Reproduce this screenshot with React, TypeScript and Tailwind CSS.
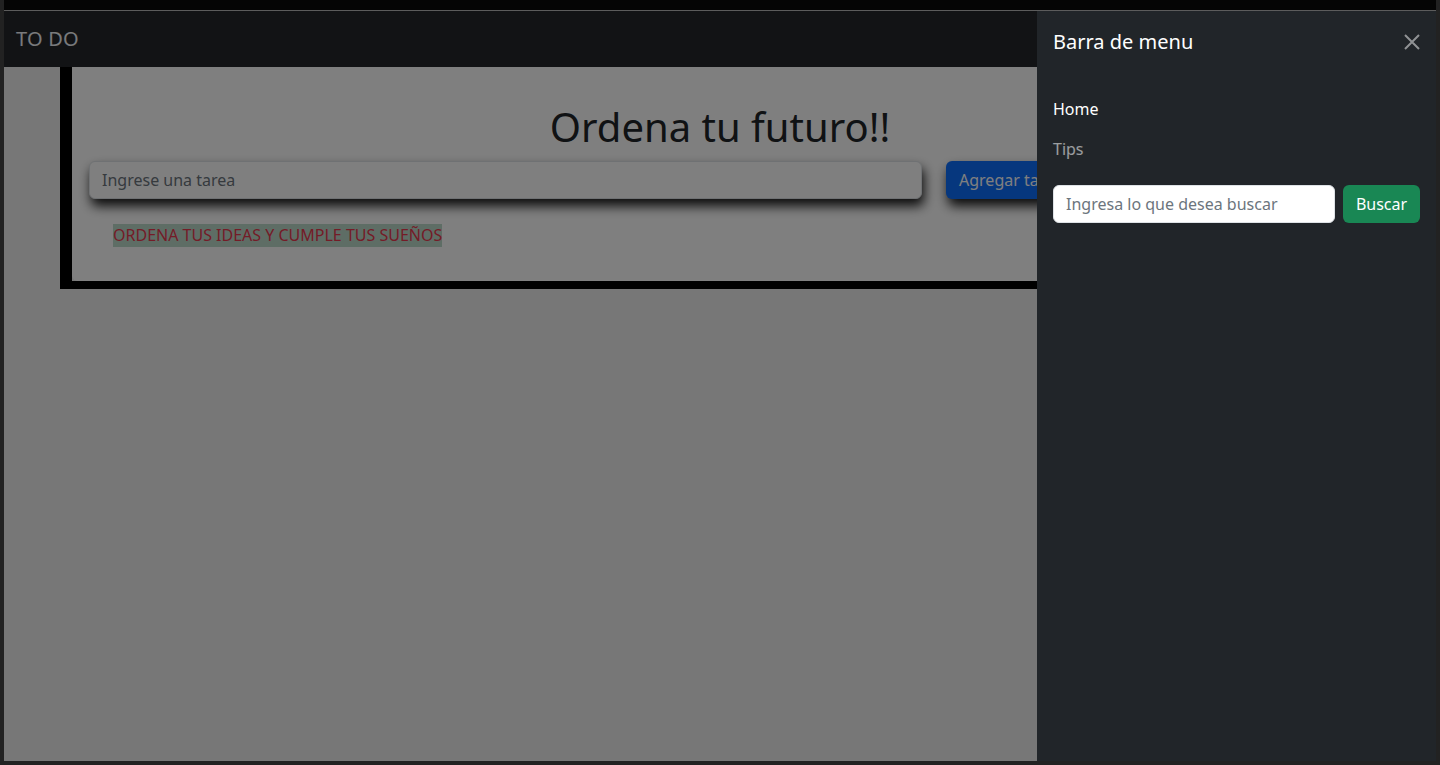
import React from "react";

export default function App() {
  return (
    <div
      className="w-[1440px] h-[765px] bg-[#222222] px-[4px] pb-[4px] flex flex-col overflow-hidden"
      style={{ fontFamily: '"Noto Sans", "Open Sans", sans-serif' }}
    >
      <div className="h-[10px] bg-[#050505] shrink-0" />
      <div className="h-px bg-[#5c5c5c] shrink-0" />
      <div className="relative flex-1 bg-[#eeeeee] overflow-hidden">
        {/* Navbar */}
        <nav className="h-[56px] bg-[#24262a] flex items-center px-[12px]">
          <span className="text-[20px] text-[#f2f4f8] tracking-[0.2px]">TO DO</span>
        </nav>

        {/* Main content */}
        <div className="mx-[56px] border-x-[12px] border-b-[8px] border-black">
          <div className="bg-white rounded-b-[6px] pt-[36px] pb-[34px] px-[17px]">
            <h1 className="text-center text-[40px] leading-[48px] text-[#212529] font-normal">
              Ordena tu futuro!!
            </h1>
            <div className="mt-[10px] flex items-center gap-[24px]">
              <div className="w-[833px] h-[38px] rounded-[6px] border border-[#dee2e6] bg-white flex items-center px-[12px] shadow-[2px_7px_12px_rgba(0,0,0,0.9)]">
                <span className="text-[16px] text-[#6c757d]">Ingrese una tarea</span>
              </div>
              <button className="h-[38px] px-[13px] rounded-[6px] bg-[#0d6efd] text-[16px] text-white whitespace-nowrap shadow-[2px_7px_12px_rgba(0,0,0,0.9)]">
                Agregar tarea
              </button>
            </div>
            <div className="mt-[24px] pl-[24px]">
              <span className="inline-block bg-[#bcdacb] text-[#e8384f] text-[16px] leading-[23px]">
                ORDENA TUS IDEAS Y CUMPLE TUS SUEÑOS
              </span>
            </div>
          </div>
        </div>

        {/* Backdrop */}
        <div className="absolute inset-0 bg-black/50" />

        {/* Offcanvas */}
        <div className="absolute top-0 right-0 bottom-0 w-[399px] bg-[#212529] text-white flex flex-col">
          <div className="flex items-center justify-between p-[16px]">
            <h5 className="text-[20px] leading-[30px] font-normal text-white">Barra de menu</h5>
            <button className="w-[16px] h-[16px] opacity-50">
              <svg viewBox="0 0 16 16" width="16" height="16">
                <path d="M1 1 L15 15 M15 1 L1 15" stroke="#ffffff" strokeWidth="2" strokeLinecap="butt" />
              </svg>
            </button>
          </div>
          <div className="px-[16px] pt-[16px]">
            <ul className="flex flex-col">
              <li className="py-[8px] text-[16px] leading-[24px] text-white">Home</li>
              <li className="py-[8px] text-[16px] leading-[24px] text-white/55">Tips</li>
            </ul>
            <div className="mt-[16px] flex items-center gap-[8px]">
              <div className="w-[282px] h-[38px] rounded-[6px] bg-white border border-[#dee2e6] flex items-center px-[12px]">
                <span className="text-[16px] text-[#6c757d]">Ingresa lo que desea buscar</span>
              </div>
              <button className="w-[77px] h-[38px] rounded-[6px] bg-[#198754] text-white text-[16px]">
                Buscar
              </button>
            </div>
          </div>
        </div>
      </div>
    </div>
  );
}
